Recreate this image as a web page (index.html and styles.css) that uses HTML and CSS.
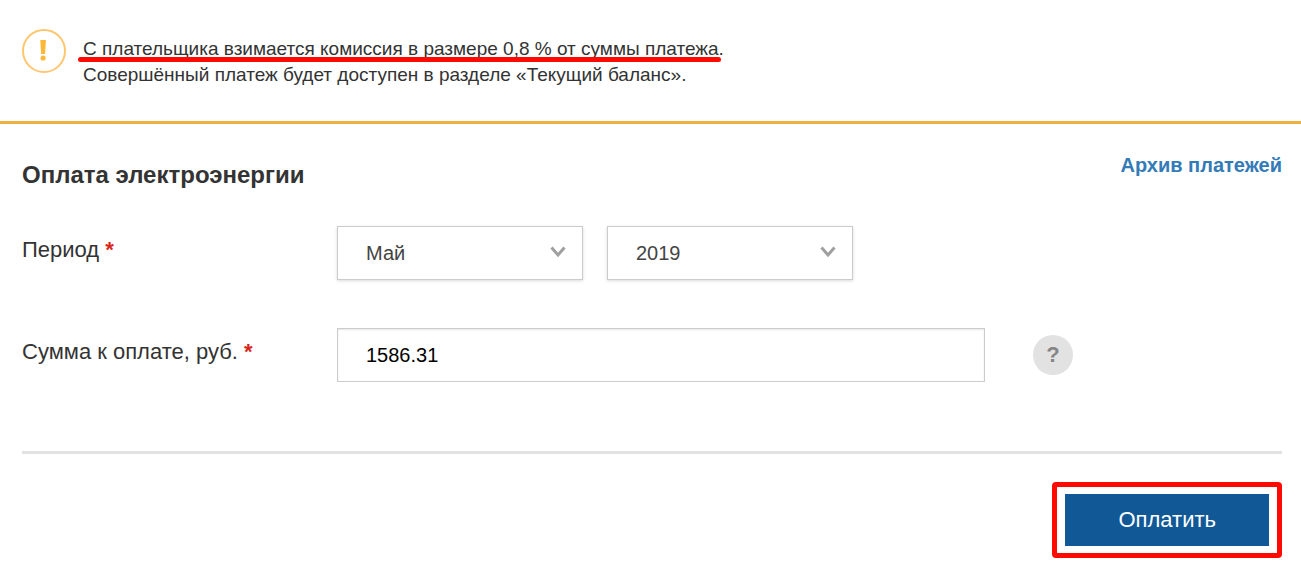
FILE: index.html
```html
<!DOCTYPE html>
<html lang="ru">
<head>
<meta charset="utf-8">
<meta name="viewport" content="width=device-width, initial-scale=1">
<title>Оплата электроэнергии</title>
<link rel="stylesheet" href="styles.css">
</head>
<body>
<section class="notice">
  <svg class="notice-icon" viewBox="0 0 44 44" aria-hidden="true">
    <circle cx="22" cy="22" r="21" fill="none" stroke="#ffc66d" stroke-width="2"/>
    <path d="M18.300 11h5.600l-.8 14h-4z" fill="#fdb83a"/>
    <circle cx="21.100" cy="29" r="2.600" fill="#fdb83a"/>
  </svg>
  <p class="notice-text"><span class="marked">С плательщика взимается комиссия в размере 0,8 % от суммы платежа.</span><br>Совершённый платеж будет доступен в разделе «Текущий баланс».</p>
</section>
<main class="payment">
  <header class="payment-header">
    <h1 class="title">Оплата электроэнергии</h1>
    <a class="archive" href="#">Архив платежей</a>
  </header>
  <form class="form">
    <div class="row">
      <label class="label" for="month">Период <span class="required">*</span></label>
      <div class="fields">
        <div class="select-box">
          <select class="control select" id="month"><option>Май</option></select>
          <svg class="chevron" viewBox="0 0 16 12" aria-hidden="true"><path d="M1.500 1.500l6.500 7.500 6.500-7.500" fill="none" stroke="#a0a0a0" stroke-width="3"/></svg>
        </div>
        <div class="select-box">
          <select class="control select" aria-label="Год"><option>2019</option></select>
          <svg class="chevron" viewBox="0 0 16 12" aria-hidden="true"><path d="M1.500 1.500l6.500 7.500 6.500-7.500" fill="none" stroke="#a0a0a0" stroke-width="3"/></svg>
        </div>
      </div>
    </div>
    <div class="row">
      <label class="label" for="amount">Сумма к оплате, руб. <span class="required">*</span></label>
      <div class="fields">
        <input class="control amount" id="amount" type="text" value="1586.31">
      </div>
      <button class="help" type="button">?</button>
    </div>
    <footer class="actions">
      <div class="highlight"><button class="pay" type="submit">Оплатить</button></div>
    </footer>
  </form>
</main>
</body>
</html>
```
FILE: styles.css
```css
* {
  box-sizing: border-box;
}

body {
  margin: 0;
  background: #fff;
  color: #333;
  font-family: "Liberation Sans", Arial, sans-serif;
}

.notice {
  display: flex;
  align-items: flex-start;
  gap: 17px;
  padding: 29px 20px 26px 22px;
  border-bottom: 3px solid #edb041;
}

.notice-icon {
  flex: none;
  width: 44px;
  height: 44px;
}

.notice-text {
  margin: 0;
  padding: 7px 0;
  font-size: 19px;
  line-height: 26px;
}

.marked {
  position: relative;
}

.marked::after {
  content: "";
  position: absolute;
  left: -5px;
  right: 3px;
  bottom: -3px;
  height: 5px;
  border-radius: 3px;
  background: #ff0a00;
}

.payment {
  padding: 0 19px 0 22px;
}

.payment-header {
  display: flex;
  justify-content: space-between;
  align-items: flex-start;
  padding-top: 26px;
}

.title {
  margin: 0;
  padding-top: 8px;
  font-size: 24px;
  line-height: 34px;
}

.archive {
  color: #337ab7;
  font-size: 20px;
  font-weight: bold;
  line-height: 30px;
  text-decoration: none;
}

.form {
  display: flex;
  flex-direction: column;
  gap: 48px;
  padding-top: 34px;
}

.row {
  display: grid;
  grid-template-columns: 25% minmax(0, 648fr) minmax(40px, 297fr);
}

.label {
  padding-top: 11px;
  font-size: 22px;
  line-height: 26px;
}

.required {
  color: #d9261c;
  font-weight: bold;
}

.fields {
  display: flex;
  gap: 24px;
}

.select-box {
  position: relative;
  flex: 0 1 246px;
}

.control {
  width: 100%;
  height: 54px;
  padding: 0 28px;
  border: 1px solid #ccc;
  border-radius: 0;
  background: #fff;
  font-family: inherit;
  font-size: 20px;
}

.select {
  appearance: none;
  color: #444;
  box-shadow: 0 1px 3px rgba(0, 0, 0, 0.15);
}

.chevron {
  position: absolute;
  top: 20px;
  right: 17px;
  width: 16px;
  height: 12px;
  pointer-events: none;
}

.amount {
  color: #000;
  box-shadow: inset 0 1px 2px rgba(0, 0, 0, 0.1);
}

.help {
  width: 40px;
  height: 40px;
  margin: 7px 0 0 48px;
  padding: 0;
  border: 0;
  border-radius: 50%;
  background: #e2e2e2;
  color: #858585;
  font-family: inherit;
  font-size: 22px;
  font-weight: bold;
}

.actions {
  display: flex;
  justify-content: flex-end;
  margin-top: 21px;
  padding-top: 28px;
  border-top: 3px solid #e2e2e2;
}

.highlight {
  padding: 7px 8px;
  border: 5px solid #ff0a00;
  border-radius: 4px;
}

.pay {
  display: block;
  height: 52px;
  padding: 0 53px;
  border: 0;
  background: #115896;
  color: #fff;
  font-family: inherit;
  font-size: 22px;
}
```
